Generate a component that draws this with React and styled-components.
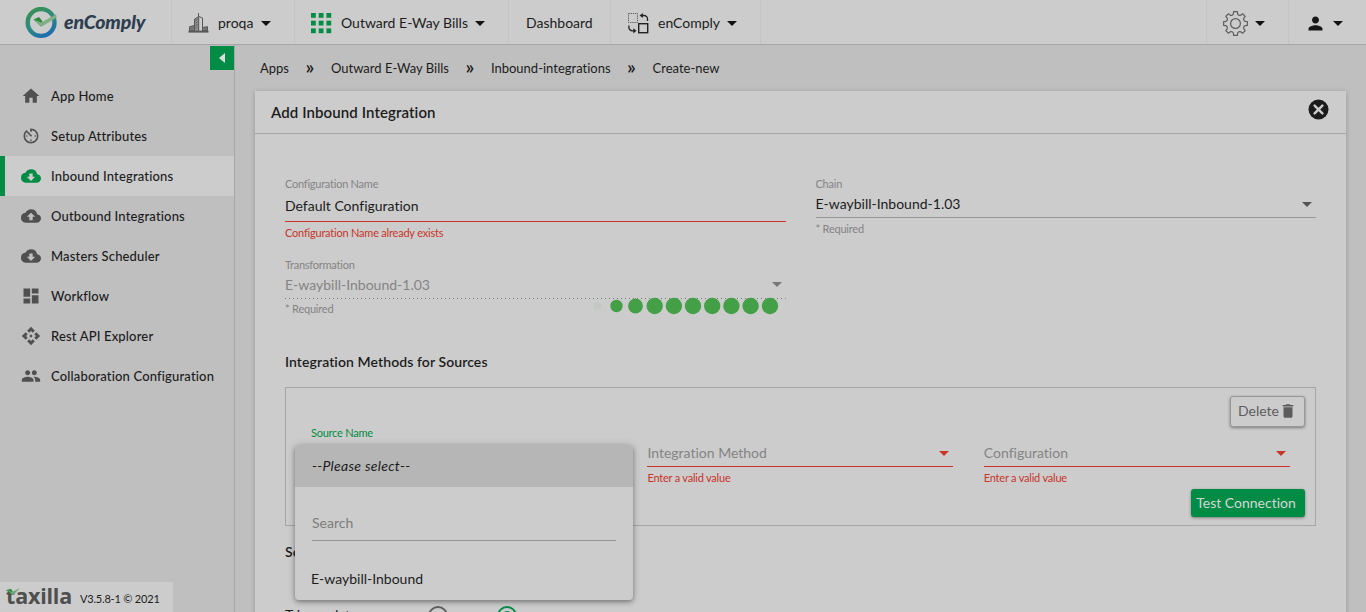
import React from 'react';
import styled, { createGlobalStyle } from 'styled-components';
import {
  MdHome, MdAvTimer, MdCloudDownload, MdCloudUpload, MdDashboard, MdApi, MdPeople, MdDelete, MdPerson,
} from 'react-icons/md';

const c = {
  page: '#bfbfbf', panel: '#cccccc', line: '#a6a6a6', green: '#008c44', red: '#c8352b', text: '#1c1c1c', muted: '#848484',
};

const Global = createGlobalStyle`
  * { box-sizing: border-box; }
  body {
    margin: 0; font-family: Lato, "Liberation Sans", sans-serif; font-size: 14px; color: ${c.text}; background: ${c.page};
    font-variant-ligatures: none;
  }
`;

const Page = styled.div`
  width: 100%; height: 612px; overflow: hidden; display: flex; flex-direction: column; position: relative;
`;
const Header = styled.header`
  height: 45px; flex: none; display: flex; background: ${c.panel}; border-bottom: 1px solid ${c.line};
`;
const Cell = styled.div`
  display: flex; align-items: center; width: ${p => p.$w}px; height: 44px; padding-left: ${p => p.$pl}px;
  border-right: ${p => (p.$last ? 'none' : '1px solid #c4c4c4')};
  margin-left: ${p => (p.$push ? 'auto' : 0)};
  svg { flex: none; margin-top: 2px; }
`;
const NavText = styled.span`
  margin-left: ${p => p.$ml || 0}px; line-height: 20px; white-space: nowrap; padding-top: 2px;
`;
const Brand = styled.span`
  font-size: 19.5px; font-weight: 900; font-style: italic; letter-spacing: -.15px; color: #2e3d4f; margin-left: 6px; line-height: 24px;
`;
const Caret = styled.i`
  flex: none; width: 0; height: 0; border: 5px solid transparent; border-bottom: 0; border-top-color: ${p => p.$color || '#111'};
  margin: ${p => p.$m || '2px 0 0 7px'};
`;

const Body = styled.div`display: flex; flex: 1; min-height: 0;`;
const Sidebar = styled.aside`
  width: 235px; flex: none; border-right: 1px solid ${c.line}; display: flex; flex-direction: column; padding-top: 1px;
`;
const Collapse = styled.button`
  width: 24px; height: 24px; border: 0; padding: 0; background: ${c.green}; align-self: flex-end; display: flex; align-items: center; justify-content: center;
  margin-bottom: 6px;
`;
const MenuItem = styled.a`
  height: 40px; display: flex; align-items: center; padding-left: 16px; border-left: 5px solid ${p => (p.$active ? c.green : 'transparent')};
  background: ${p => (p.$active ? c.panel : 'transparent')}; font-size: 13px; font-weight: 500; letter-spacing: .16px; white-space: nowrap;
  svg { width: 20px; height: 20px; margin-right: 10px; color: ${p => (p.$active ? c.green : '#505050')}; }
`;
const Version = styled.footer`
  margin-top: auto; width: 173px; height: 30px; background: ${c.panel}; display: flex; align-items: center; padding: 0 0 2px 6px; font-size: 11px; white-space: nowrap;
`;
const VersionText = styled.span`margin-left: 8px; padding-top: 4px; letter-spacing: -.2px;`;

const Main = styled.main`flex: 1; min-width: 0; padding: 0 20px;`;
const Crumbs = styled.nav`
  height: 46px; display: flex; align-items: center; padding-left: 5px; font-size: 13px; white-space: nowrap;
`;
const Crumb = styled.span`line-height: 16px; padding-bottom: 1px;`;
const Chevron = styled.span`width: 42px; text-align: center; font-size: 20px; font-weight: 600; line-height: 18px; padding-bottom: 4px;`;

const Card = styled.section`background: ${c.panel}; height: 600px; box-shadow: 0 1px 5px rgba(0,0,0,.22);`;
const CardHead = styled.div`
  height: 43px; border-bottom: 1px solid ${c.line}; display: flex; align-items: center; justify-content: space-between; padding: 0 17px 0 16px;
  svg { margin-bottom: 5px; }
`;
const Title = styled.h1`margin: 0; font-size: 15px; font-weight: 600; line-height: 20px; letter-spacing: .1px;`;
const CardBody = styled.div`padding: 42px 30px 0;`;
const Row = styled.div`display: grid; grid-template-columns: 1fr 1fr; column-gap: 30px; height: ${p => p.$h}px;`;

const Field = styled.div`min-width: 0;`;
const Label = styled.div`
  font-size: 11px; line-height: 14px; height: 14px; margin-top: ${p => p.$mt || 0}px; letter-spacing: -.24px; color: ${p => p.$color || c.muted};
`;
const Control = styled.div`
  height: ${p => p.$h || 27}px; display: flex; align-items: flex-end; justify-content: space-between; padding-bottom: ${p => p.$pb || 4}px;
  border-bottom: 1px ${p => (p.$dotted ? 'none' : 'solid')} ${p => p.$line || '#969696'}; color: ${p => p.$color || c.text};
  background: ${p => (p.$dotted ? 'repeating-linear-gradient(90deg,#777 0 1px,transparent 1px 4px) bottom/100% 1px no-repeat' : 'none')};
  line-height: 18px;
`;
const Hint = styled.div`
  font-size: 11px; line-height: 14px; margin-top: ${p => p.$mt || 4}px; letter-spacing: -.21px; color: ${p => p.$color || c.muted}; white-space: nowrap;
`;
const SubTitle = styled.h2`margin: 0; font-size: 14px; line-height: 18px; font-weight: 600; letter-spacing: .09px;`;
const SchedulerTitle = styled(SubTitle)`margin-top: 17px;`;

const SourceBox = styled.div`
  margin-top: 16px; height: 139px; border: 1px solid ${c.line}; display: flex; flex-direction: column; align-items: flex-end; padding: 8px 10px;
`;
const Button = styled.button`
  font: inherit; display: flex; align-items: center; justify-content: center; border-radius: 3px; flex: none;
  padding: ${p => (p.$primary ? '0 4px 1px 0' : '0 0 2px')};
  width: ${p => p.$w}px; height: ${p => p.$h}px; color: ${p => (p.$primary ? '#d6d6d6' : '#5c5c5c')};
  background: ${p => (p.$primary ? c.green : c.panel)}; border: ${p => (p.$primary ? '0' : '1px solid #989898')};
  box-shadow: 0 1px 3px rgba(0,0,0,.4); white-space: nowrap;
`;
const Methods = styled.div`
  width: 100%; height: 62px; padding: 0 15px; display: grid; grid-template-columns: 306px 306px 306px; column-gap: 30.4px;
`;
const SourceField = styled.div`position: relative;`;
const Menu = styled.div`
  position: absolute; left: -16px; top: 18px; width: 338px; height: 155px; background: ${c.panel}; border-radius: 4px; overflow: hidden;
  box-shadow: 0 2px 4px rgba(0,0,0,.3), 0 1px 8px rgba(0,0,0,.2); z-index: 2;
`;
const Option = styled.div`
  height: 42px; padding: 0 0 2px ${p => (p.$selected ? 17 : 16)}px; display: flex; align-items: center;
  background: ${p => (p.$selected ? '#b6b6b6' : 'transparent')};
  font-style: ${p => (p.$selected ? 'italic' : 'normal')}; letter-spacing: ${p => (p.$selected ? 0.3 : 0)}px;
`;
const Search = styled.div`
  margin: 26px 17px 17px; height: 28px; border-bottom: 1px solid #949494; color: #7c7c7c; line-height: 20px;
`;
const Trigger = styled.div`display: flex; margin-top: 45px; height: 22px; align-items: flex-start;`;
const TriggerLabel = styled.span`width: 143px; line-height: 18px;`;
const Radio = styled.span`
  width: 20px; height: 20px; border-radius: 50%; border: 2px solid ${p => (p.$on ? c.green : '#5f5f5f')}; margin-right: 49px; display: flex; align-items: center; justify-content: center;
  &::after { content: ''; width: 10px; height: 10px; border-radius: 50%; background: ${p => (p.$on ? c.green : 'transparent')}; }
`;
const Loader = styled.div`position: absolute; left: 588px; top: 297px; z-index: 3;`;

function LogoMark() {
  return (
    <svg width="33" height="32" viewBox="0 0 33 32">
      <defs>
        <linearGradient id="ring" x1=".2" y1="0" x2=".7" y2="1">
          <stop offset="0" stopColor="#389052" /><stop offset=".5" stopColor="#2c8c82" /><stop offset="1" stopColor="#1e6eae" />
        </linearGradient>
      </defs>
      <circle cx="16.1" cy="15.5" r="13.4" fill="none" stroke="url(#ring)" strokeWidth="4.4" />
      <path d="M8.5 12.4l5.5-2.4 3.4 4.3-1.5 5.3z" fill="#2c8a3a" />
      <path d="M8.5 12.4l7.7 3.1L31 7.2l.8 3.2-15.4 9.3z" fill="#81ae87" />
    </svg>
  );
}
function Building() {
  return (
    <svg width="21" height="21" viewBox="0 0 21 21" fill="none" stroke="#585858">
      <path d="M10.5 0v3" /><path d="M6.5 18V6.2l4.2-2.8v14.8" fill="#8f8f8f" /><path d="M10.7 3.4l3.8 1.6V18" />
      <path d="M1.5 18v-4.2l5-1.4V18zM14.5 14.5l5-.8V18h-5z" fill="#777" />
      <path d="M6.5 8l4-2M6.5 10.5l4-2M6.5 13l4-2M6.5 15.5l4-2" stroke="#666" strokeWidth=".8" />
      <path d="M.5 18.6h20" strokeWidth="2" />
    </svg>
  );
}
function Grid9() {
  const at = [0, 7.7, 15.4];
  return (
    <svg width="21" height="21" viewBox="0 0 21 21" fill={c.green}>
      {at.flatMap(y => at.map(x => <rect key={`${x}-${y}`} x={x} y={y} width="4.8" height="4.8" />))}
    </svg>
  );
}
function Swap() {
  return (
    <svg width="22" height="21" viewBox="0 0 22 21" fill="none" stroke="#222" strokeWidth="1.3">
      <rect x=".5" y=".5" width="9" height="9" strokeDasharray="1.2 1" strokeWidth=".9" stroke="#444" />
      <rect x="10.7" y="10.7" width="9" height="9" strokeWidth="1.4" />
      <path d="M13.5 2.5H16a3.5 3.5 0 0 1 3.5 3.5V8" /><path d="M14.8 0v5L11.6 2.5z" fill="#222" stroke="none" />
      <path d="M.9 12.6v1.8a3.4 3.4 0 0 0 3.4 3.4h2" /><path d="M5.3 15.2v5.2L8.5 17.8z" fill="#222" stroke="none" />
    </svg>
  );
}
function Gear() {
  const at = (deg, r) => {
    const a = (deg * Math.PI) / 180;
    return `${(12.5 + r * Math.cos(a)).toFixed(2)} ${(12.5 + r * Math.sin(a)).toFixed(2)}`;
  };
  let d = `M${at(-9, 12)}`;
  for (let i = 0; i < 8; i += 1) {
    const b = i * 45;
    d += `L${at(b + 9, 12)}L${at(b + 12, 10)}Q${at(b + 22.5, 8)} ${at(b + 33, 10)}L${at(b + 36, 12)}`;
  }
  return (
    <svg width="25" height="25" viewBox="0 0 25 25" fill="none" stroke="#5e5e5e" strokeWidth="1.2" strokeLinejoin="round">
      <path d={`${d}Z`} /><circle cx="12.5" cy="12.5" r="4.9" />
    </svg>
  );
}
function Close() {
  return (
    <svg width="21" height="21" viewBox="0 0 21 21">
      <circle cx="10.5" cy="10.5" r="10" fill="#1b1b1b" />
      <path d="M6.6 6.6l7.8 7.8M14.4 6.6l-7.8 7.8" stroke="#ccc" strokeWidth="2.4" strokeLinecap="round" />
    </svg>
  );
}
const Wordmark = styled.span`
  font-family: "Open Sans", Lato, sans-serif; font-size: 21.5px; font-weight: 700; line-height: 24px; letter-spacing: -.2px; color: #4f4f4f; position: relative;
  svg { position: absolute; left: 0; top: 3px; }
`;

const items = [
  ['App Home', MdHome], ['Setup Attributes', MdAvTimer], ['Inbound Integrations', MdCloudDownload, true],
  ['Outbound Integrations', MdCloudUpload], ['Masters Scheduler', MdCloudDownload], ['Workflow', MdDashboard],
  ['Rest API Explorer', MdApi], ['Collaboration Configuration', MdPeople],
];
const dots = [[9, 4], [28.5, 6.2], [47.5, 7.4], [66.7, 8.2], [85.9, 8.2], [105, 8.2], [124.2, 8.2], [143.4, 8.2], [162.6, 8.2], [182, 8.2]];

export default function App() {
  return (
    <Page>
      <Global />
      <Header>
        <Cell $w={172} $pl={25}><LogoMark /><Brand>enComply</Brand></Cell>
        <Cell $w={123} $pl={16}><Building /><NavText $ml={9}>proqa</NavText><Caret $m="2px 0 0 8px" /></Cell>
        <Cell $w={214} $pl={16}><Grid9 /><NavText $ml={9}>Outward E-Way Bills</NavText><Caret /></Cell>
        <Cell $w={102} $pl={17}><NavText>Dashboard</NavText></Cell>
        <Cell $w={150} $pl={17}><Swap /><NavText $ml={8}>enComply</NavText><Caret /></Cell>
        <Cell $w={0} $pl={0} $push />
        <Cell $w={82} $pl={16}><Gear /><Caret /></Cell>
        <Cell $w={77} $pl={16} $last><MdPerson size={21} color="#161616" /><Caret /></Cell>
      </Header>
      <Body>
        <Sidebar>
          <Collapse><svg width="6" height="10"><path d="M6 0v10L0 5z" fill="#ddd" /></svg></Collapse>
          {items.map(([name, Icon, active]) => <MenuItem key={name} $active={active}><Icon />{name}</MenuItem>)}
          <Version>
            <Wordmark>taxilla
              <svg width="15" height="9"><path d="M0 3l5-1 2 3-1 3z" fill="#2c8a3a" /><path d="M1 3l5 2 8-4-7 7z" fill="#6fa578" /></svg>
            </Wordmark>
            <VersionText>V3.5.8-1 © 2021</VersionText>
          </Version>
        </Sidebar>
        <Main>
          <Crumbs>
            <Crumb>Apps</Crumb><Chevron>»</Chevron><Crumb>Outward E-Way Bills</Crumb><Chevron>»</Chevron>
            <Crumb>Inbound-integrations</Crumb><Chevron>»</Chevron><Crumb>Create-new</Crumb>
          </Crumbs>
          <Card>
            <CardHead><Title>Add Inbound Integration</Title><Close /></CardHead>
            <CardBody>
              <Row $h={81}>
                <Field>
                  <Label $mt={1}>Configuration Name</Label>
                  <Control $h={31} $pb={6} $line={c.red}>Default Configuration</Control>
                  <Hint $color={c.red}>Configuration Name already exists</Hint>
                </Field>
                <Field>
                  <Label $mt={1}>Chain</Label>
                  <Control><span>E-waybill-Inbound-1.03</span><Caret $color="#555" $m="0 4px 6px 0" /></Control>
                  <Hint>* Required</Hint>
                </Field>
              </Row>
              <Row $h={96}>
                <Field>
                  <Label $mt={1}>Transformation</Label>
                  <Control $dotted $pb={5} $color={c.muted}><span>E-waybill-Inbound-1.03</span><Caret $color="#777" $m="0 4px 7px 0" /></Control>
                  <Hint $mt={3}>* Required</Hint>
                </Field>
              </Row>
              <SubTitle>Integration Methods for Sources</SubTitle>
              <SourceBox>
                <Button $w={75} $h={31}>Delete<MdDelete size={18} /></Button>
                <Methods>
                  <SourceField>
                    <Label $mt={-1} $color={c.green}>Source Name</Label>
                    <Menu>
                      <Option $selected>--Please select--</Option>
                      <Search>Search</Search>
                      <Option>E-waybill-Inbound</Option>
                    </Menu>
                  </SourceField>
                  {['Integration Method', 'Configuration'].map(n => (
                    <Field key={n}>
                      <Control $h={40} $line={c.red} $color={c.muted}><span>{n}</span><Caret $color={c.red} $m="0 4px 6px 0" /></Control>
                      <Hint $color={c.red}>Enter a valid value</Hint>
                    </Field>
                  ))}
                </Methods>
                <Button $primary $w={114} $h={28}>Test Connection</Button>
              </SourceBox>
              <SchedulerTitle>Source Scheduler</SchedulerTitle>
              <Trigger><TriggerLabel>Trigger date</TriggerLabel><Radio /><Radio $on /></Trigger>
            </CardBody>
          </Card>
        </Main>
      </Body>
      <Loader>
        <svg width="195" height="19">
          {dots.map(([x, r], i) => <circle key={x} cx={x} cy="9" r={r} fill="#43a047" opacity={i === 0 ? 0.07 : 1} />)}
        </svg>
      </Loader>
    </Page>
  );
}
